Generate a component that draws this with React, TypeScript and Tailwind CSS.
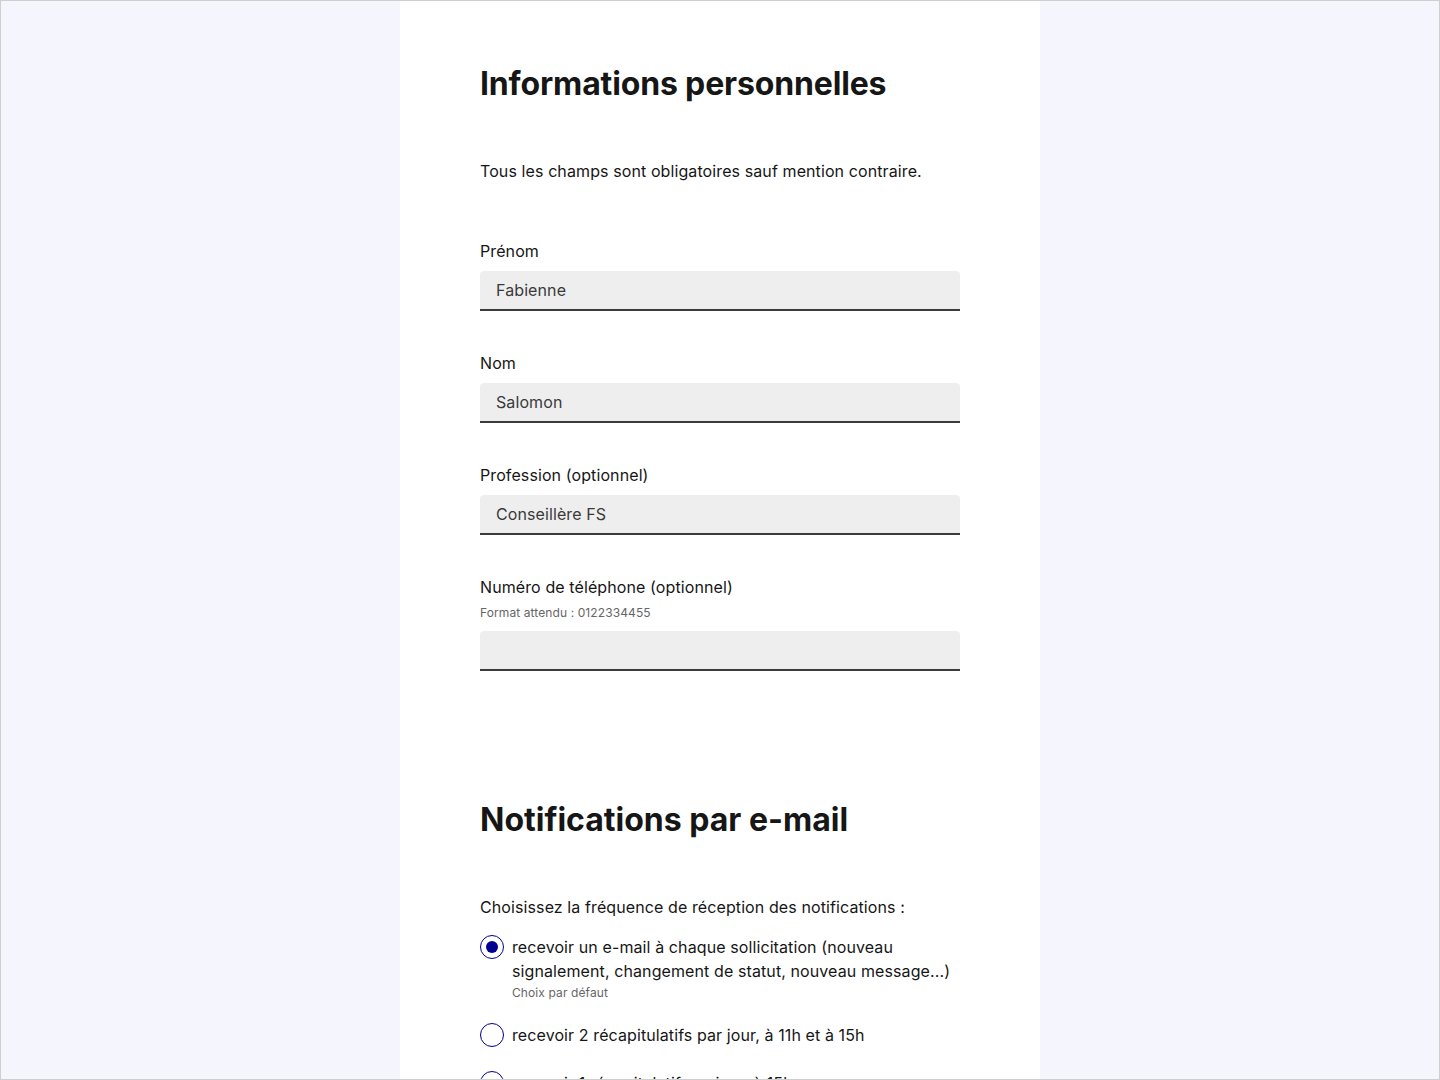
import * as React from "react";

const FONT = "font-['Inter','Liberation_Sans',sans-serif]";

type FieldProps = {
  label: string;
  value?: string;
  hint?: string;
  first?: boolean;
};

const Field = ({ label, value, hint, first }: FieldProps) => {
  return (
    <div className={first ? "mt-14" : "mt-10"}>
      <label className="block text-base leading-6 text-[#161616]">{label}</label>
      {hint && <p className="mt-1 text-xs leading-5 text-[#666666]">{hint}</p>}
      <input
        type="text"
        defaultValue={value}
        className="mt-2 block h-10 w-full rounded-t-[4px] border-b-2 border-[#3a3a3a] bg-[#eeeeee] px-4 text-base leading-6 tracking-[0.1px] text-[#3a3a3a] outline-none"
      />
    </div>
  );
};

type RadioProps = {
  checked?: boolean;
  label: string;
  hint?: string;
  className?: string;
};

const Radio = ({ checked, label, hint, className }: RadioProps) => {
  return (
    <div className={"flex gap-2 " + (className ?? "")}>
      <span className="flex h-6 w-6 shrink-0 items-center justify-center rounded-full border border-[#000091]">
        {checked && <span className="h-3 w-3 rounded-full bg-[#000091]" />}
      </span>
      <div>
        <p className="text-base leading-6 text-[#161616]">{label}</p>
        {hint && <p className="text-xs leading-5 text-[#666666]">{hint}</p>}
      </div>
    </div>
  );
};

const App = () => {
  return (
    <div className={"h-[1080px] w-full overflow-hidden border border-[#cecece] bg-[#f5f5fe] tracking-[0.1px] " + FONT}>
      <div className="mx-auto min-h-full w-[640px] bg-white px-20 pt-[63px]">
        {/* INFORMATIONS */}
        <h2 className="text-[32px] font-bold leading-10 tracking-[-0.15px] text-[#161616]">Informations personnelles</h2>
        <p className="mt-[55px] text-base leading-6 text-[#161616]">
          Tous les champs sont obligatoires sauf mention contraire.
        </p>
        <Field first label="Prénom" value="Fabienne" />
        <Field label="Nom" value="Salomon" />
        <Field label="Profession (optionnel)" value="Conseillère FS" />
        <Field label="Numéro de téléphone (optionnel)" hint="Format attendu : 0122334455" />

        {/* NOTIFICATIONS */}
        <h2 className="mt-[129px] text-[32px] font-bold leading-10 tracking-normal text-[#161616]">Notifications par e-mail</h2>
        <p className="mt-[55px] text-base leading-6 text-[#161616]">
          Choisissez la fréquence de réception des notifications :
        </p>
        <Radio
          className="mt-4"
          checked
          label="recevoir un e-mail à chaque sollicitation (nouveau signalement, changement de statut, nouveau message...)"
          hint="Choix par défaut"
        />
        <Radio className="mt-5" label="recevoir 2 récapitulatifs par jour, à 11h et à 15h" />
        <Radio className="mt-6" label="recevoir 1 récapitulatif par jour, à 15h" />
      </div>
    </div>
  );
};

export default App;
